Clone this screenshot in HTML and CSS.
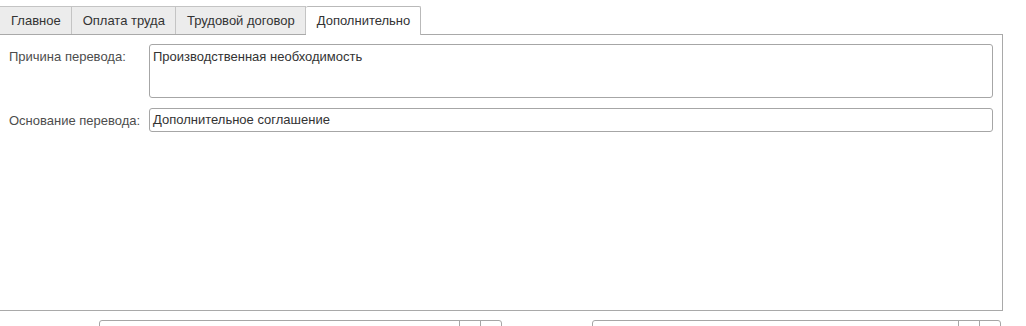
FILE: index.html
```html
<!DOCTYPE html>
<html lang="ru">
<head>
<meta charset="utf-8">
<link rel="stylesheet" href="styles.css">
</head>
<body>
<div class="tabs">
  <div class="tab">Главное</div>
  <div class="tab">Оплата труда</div>
  <div class="tab">Трудовой договор</div>
  <div class="tab active">Дополнительно</div>
</div>
<div class="panel">
  <div class="row">
    <div class="label">Причина перевода:</div>
    <div class="field area">Производственная необходимость</div>
  </div>
  <div class="row">
    <div class="label">Основание перевода:</div>
    <div class="field">Дополнительное соглашение</div>
  </div>
</div>
<div class="bottom">
  <div class="combo c1"><div class="cval"></div><div class="cbtn"></div><div class="cbtn"></div></div>
  <div class="combo c2"><div class="cval"></div><div class="cbtn"></div><div class="cbtn"></div></div>
</div>
</body>
</html>
```
FILE: styles.css
```css
html, body { margin: 0; padding: 0; background: #fff; }
body {
  font-family: "Liberation Sans", Arial, sans-serif;
  font-size: 13px;
  color: #333;
  width: 1026px;
  height: 326px;
  overflow: hidden;
}
.tabs {
  display: flex;
  padding-top: 6px;
  height: 34px;
  box-sizing: border-box;
}
.tab {
  height: 28px;
  box-sizing: border-box;
  padding: 0 10px 0 11px;
  line-height: 27px;
  background: #ececec;
  border-top: 1px solid #c4c4c4;
  border-right: 1px solid #c4c4c4;
  color: #333;
  white-space: nowrap;
}
.tab.active {
  background: #fff;
  height: 29px;
  border-top-color: #b9b9b9;
  border-right-color: #b9b9b9;
  border-radius: 2px 2px 0 0;
  position: relative;
  z-index: 1;
}
.panel {
  width: 1003px;
  height: 277px;
  box-sizing: border-box;
  border-top: 1px solid #a9a9a9;
  border-right: 1px solid #a9a9a9;
  border-bottom: 1px solid #a9a9a9;
  padding: 9px 9px 0 9px;
  display: flex;
  flex-direction: column;
  gap: 10px;
}
.row {
  display: flex;
  align-items: flex-start;
}
.label {
  width: 140px;
  flex: none;
  color: #4d4d4d;
  line-height: 25px;
  white-space: nowrap;
}
.field {
  flex: 1;
  height: 24px;
  box-sizing: border-box;
  border: 1px solid #a6a6a6;
  border-radius: 3px;
  padding: 0 3px;
  line-height: 22px;
  color: #333;
}
.field.area {
  height: 54px;
  padding-top: 1px;
}
.bottom {
  display: flex;
  padding-top: 9px;
  height: 15px;
  box-sizing: border-box;
  overflow: hidden;
}
.combo {
  display: flex;
  flex: none;
  height: 24px;
  box-sizing: border-box;
  border: 1px solid #a6a6a6;
  border-radius: 3px;
}
.c1 { margin-left: 99px; width: 403px; }
.c2 { margin-left: 90px; width: 409px; }
.cval { flex: 1; }
.cbtn {
  width: 20px;
  border-left: 1px solid #a6a6a6;
}
```
